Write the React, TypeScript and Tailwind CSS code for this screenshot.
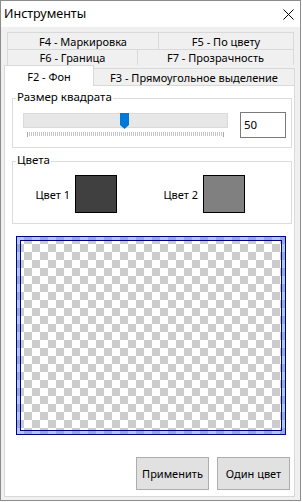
import React from "react";

function Ticks() {
  const lines = [];
  for (let i = 0; i <= 98; i++) {
    const x = 4.5 + i * 2;
    const tall = i === 0 || i === 98;
    lines.push(<line key={i} x1={x} y1={0} x2={x} y2={tall ? 5 : 4} stroke={tall ? "#a8a8a8" : "#c6c6c6"} strokeWidth={1} />);
  }
  return (
    <svg width="205" height="5" className="block">
      {lines}
    </svg>
  );
}

function GroupLabel({ children }: { children: React.ReactNode }) {
  return (
    <span className="absolute left-[3px] top-[-8px] bg-white px-[1px] leading-[12px] text-[11.5px]">{children}</span>
  );
}

export default function App() {
  return (
    <div className="w-[302px] h-[502px] bg-white font-['Noto_Sans',sans-serif] text-[11px] text-black leading-none">
      <div className="w-[301px] h-[501px] border border-[#8c8c8c] flex flex-col">
        {/* Title bar */}
        <div className="h-[26px] bg-white flex items-center justify-between pl-[3px] pr-[6px]">
          <span className="text-[12.5px] leading-none">Инструменты</span>
          <svg width="11" height="11" viewBox="0 0 11 11" className="block">
            <path d="M0.5 0.5L10.5 10.5M10.5 0.5L0.5 10.5" stroke="#000" strokeWidth="1" />
          </svg>
        </div>
        {/* Body */}
        <div className="flex-1 bg-[#f0f0f0] pl-[3px] pr-[5px] pt-[5px] pb-[3px] flex flex-col">
          {/* Tabs */}
          <div className="flex ml-[3px] mr-[1px] h-[17px]">
            <div className="w-[152px] border-l border-t border-r border-[#d9d9d9] flex items-center justify-center">F4 - Маркировка</div>
            <div className="flex-1 border-t border-r border-[#d9d9d9] flex items-center justify-center">F5 - По цвету</div>
          </div>
          <div className="flex ml-[3px] mr-[1px] h-[16px]">
            <div className="w-[131px] border-l border-t border-r border-[#d9d9d9] flex items-center justify-center">F6 - Граница</div>
            <div className="flex-1 border-t border-r border-[#d9d9d9] flex items-center justify-center">F7 - Прозрачность</div>
          </div>
          <div className="flex h-[21px] -mb-px relative z-10">
            <div className="w-[90px] h-[21px] bg-white border-l border-t border-r border-[#d9d9d9] flex items-center justify-center">F2 - Фон</div>
            <div className="flex-1 mt-[3px] h-[17px] border-t border-r border-[#d9d9d9] flex items-center justify-center">F3 - Прямоугольное выделение</div>
          </div>
          {/* Panel */}
          <div className="flex-1 bg-white border border-[#d9d9d9] flex flex-col pl-[7px] pt-[12px]">
            {/* Group 1 */}
            <div className="relative w-[280px] h-[50px] border border-[#dcdcdc] flex items-start pl-[10px] pt-[13px]">
              <GroupLabel>Размер квадрата</GroupLabel>
              <div className="w-[205px] pt-[1px] flex flex-col">
                <div className="relative h-[15px] bg-[#e7e7e7] border border-[#dadada]">
                  <svg width="9" height="16" viewBox="0 0 9 16" className="absolute left-[96px] top-[-1px]">
                    <path d="M0 0H9V12L4.5 16L0 12Z" fill="#0078d7" />
                  </svg>
                </div>
                <div className="mt-[4px]">
                  <Ticks />
                </div>
              </div>
              <div className="ml-[12px] w-[46px] h-[26px] border border-[#7a7a7a] bg-white flex items-center pl-[3px] text-[11.5px]">50</div>
            </div>
            {/* Group 2 */}
            <div className="relative mt-[13px] w-[280px] h-[63px] border border-[#dcdcdc] flex items-start pt-[13px]">
              <GroupLabel>Цвета</GroupLabel>
              <div className="w-[104px] flex items-center justify-end gap-[5px]">
                <span>Цвет 1</span>
                <div className="w-[42px] h-[38px] border border-black bg-[#404040]" />
              </div>
              <div className="w-[128px] flex items-center justify-end gap-[5px]">
                <span>Цвет 2</span>
                <div className="w-[42px] h-[38px] border border-black bg-[#808080]" />
              </div>
            </div>
            {/* Preview */}
            <div className="mt-[12px] ml-[4px] w-[270px] h-[199px] border border-[#000080] bg-origin-border bg-[repeating-conic-gradient(#cccccc_0_25%,#ffffff_0_50%)] bg-[length:16px_16px]">
              <div className="h-full border-[3px] border-[rgba(80,130,240,0.45)]">
                <div className="h-full border border-[#000080]" />
              </div>
            </div>
            {/* Buttons */}
            <div className="mt-[22px] ml-[124px] flex gap-[8px]">
              <div className="w-[73px] h-[33px] bg-[#e1e1e1] border border-[#adadad] flex items-center justify-center">Применить</div>
              <div className="w-[73px] h-[33px] bg-[#e1e1e1] border border-[#adadad] flex items-center justify-center">Один цвет</div>
            </div>
          </div>
        </div>
      </div>
    </div>
  );
}
